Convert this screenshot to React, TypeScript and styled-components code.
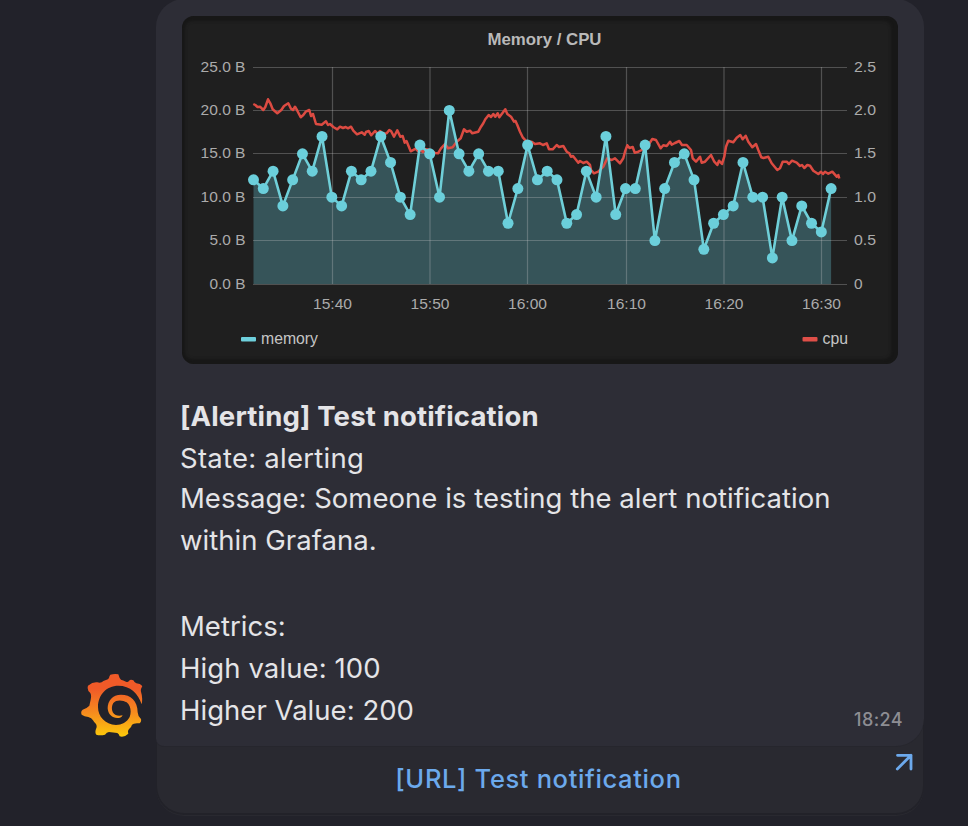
import React from "react";
import styled, { createGlobalStyle } from "styled-components";

const GlobalStyle = createGlobalStyle`
  *, *::before, *::after { box-sizing: border-box; }
  body { margin: 0; background: #22222a; }
`;

const Chat = styled.main`
  display: flex;
  align-items: flex-end;
  width: 968px;
  height: 826px;
  padding: 0 44px 12px 81px;
  overflow: hidden;
  background: #22222a;
  font-family: Inter, "Liberation Sans", sans-serif;
`;

const Avatar = styled.svg`
  flex: none;
  width: 62.4px;
  height: 63.4px;
  margin: 0 12.6px 77px 0;
`;

const Message = styled.article`
  flex: none;
  width: 768px;
`;

const Bubble = styled.section`
  position: relative;
  height: 748px;
  padding: 17px 26px 0 25px;
  background: #2d2d36;
  border-radius: 28px 28px 28px 8px;
  border-bottom: 1px solid #26262d;
`;

const Preview = styled.figure`
  width: 716px;
  height: 348px;
  margin: 0 0 0 1px;
  border-radius: 12px;
  overflow: hidden;
  background: #1f1f1f;
  box-shadow: inset -2px 0 3px 5px #171717;
`;

const ChartSvg = styled.svg`
  display: block;
  font-family: "Liberation Sans", Arial, sans-serif;
`;

const Lines = styled.div`
  padding-top: 31px;
  margin-left: -1px;
  color: #e4e4e7;
`;

const Line = styled.p<{ $bold?: boolean; $height?: number; $spacing?: number }>`
  margin: 0;
  height: ${(p) => p.$height ?? 42}px;
  line-height: 42px;
  font-size: 27.5px;
  white-space: nowrap;
  font-weight: ${(p) => (p.$bold ? 700 : 400)};
  letter-spacing: ${(p) => p.$spacing ?? 0.03}px;
`;

const Time = styled.time`
  position: absolute;
  right: 21px;
  bottom: 14px;
  color: #8d8d93;
  font-size: 18px;
  font-weight: 500;
  line-height: 24px;
  letter-spacing: 0.4px;
`;

const LinkButton = styled.a`
  display: flex;
  position: relative;
  z-index: -1;
  align-items: center;
  justify-content: center;
  height: 95px;
  margin-top: -28px;
  padding: 23px 3px 0 0;
  border: 1px solid #222229;
  border-radius: 0 0 28px 28px;
  background: #292930;
  box-shadow: 0 1px 0 #222229, 0 2px 0 #292930;
  color: #6ca9ec;
  font-size: 25.5px;
  font-weight: 500;
  letter-spacing: 0.64px;
`;

const Stack = styled.div`
  position: relative;
  z-index: 0;
`;

const Arrow = styled.svg`
  position: absolute;
  top: 32px;
  right: 9px;
`;

const memory = [
  12, 11, 13, 9, 12, 15, 13, 17, 10, 9, 13, 12, 13, 17, 14, 10, 8, 16, 15, 10,
  20, 15, 13, 15, 13, 13, 7, 11, 16, 12, 13, 12, 7, 8, 13, 10, 17, 8, 11, 11,
  16, 5, 11, 14, 15, 12, 4, 7, 8, 9, 14, 10, 10, 3, 10, 5, 9, 7, 6, 11,
];
const baseY = 284;
const memX = (i: number) => 253.5 + i * 9.79;
const memY = (v: number) => baseY - v * 8.68;
const memLine = memory.map((v, i) => `${memX(i).toFixed(2)},${memY(v).toFixed(2)}`).join(" ");

const cpu = `253.3,104 255.3,105 257.5,107 260,106.7 263.3,110 265.3,107 268,99.3 270.3,103.3 272.7,109.3 277.3,113.3
281.3,110 284,106 288.3,103.3 291,108.7 293,110 295,106.7 297.3,110.7 300.7,117.3 303.3,115 305.7,111.7 309.3,110 311,116
313,114 316,124 321.7,124.7 326,121.3 328,125 330,124 333.3,127 337.3,129.3 340,126.7 343,128 345.7,127 348,128.3 351,126.7
353.3,130.7 357,134.3 361.7,132.3 364.7,134.7 366,132 368.7,131 371.3,135.3 375,131 378,134 380,131 383,134 386.7,133.3
389.3,130 391,131 394,136.7 397.3,130.3 400.3,136.7 402.7,136 404.7,142.7 406.5,141 410.7,151.3 415.7,148.7 418,151 420,150
423,152 425,149 430,150 435,153 438,153.3 441,148.3 445,144 448,148.3 452.7,147.3 456.7,141.7 460.7,138.3 464,129.3
466.7,131.7 470,130.7 472.3,133.3 478.3,131.7 481,126.7 483.3,123.3 485.3,119.3 488.7,115 491,117 493.3,114 495.3,116.7
497.7,113.3 499.3,117.3 502.7,112.7 505.3,109.3 507.3,114 511,116.7 514,121.7 515.5,121 517.3,125 520,131.7 522.7,137.3
526.7,141.7 531.7,141.7 535,144 540,143.3 543,145 546.7,143.3 549,149.3 552.7,149.3 556.7,145 559,147 563.3,146
566.7,151.7 569.3,153.3 571,156.7 573,156 578.3,162.7 580,161 583.3,163 586.7,161.7 590,165 591,170 594,173.3 598.3,171.7
603.3,166.7 607.3,158.3 611.7,160 615,158.3 620,163.3 623.3,158.3 625,151.7 627.3,145.3 629.5,148 632.7,147 634.7,152.7
638.3,151.7 641.7,150 645,145 649,144 652.3,139 656,140 660.7,148.3 663.3,145.3 666.7,146 670,141.7 671.7,144.7 675,143
679.3,141 682,145 686.7,145 691,150 692.7,158.3 696,161.7 700,156.7 701.7,162.7 705,161.7 711,155 714.3,161.7 717.3,165
719,160.7 722,164 724.3,156.7 726,146.7 728.3,140.7 733.3,142.3 736.7,137.7 740.3,135 742.7,139.3 745.7,135.7 748.3,141.7
752.3,147.3 756,144 758.3,150 761.3,157.3 763.5,158 768.3,156.7 771.7,163.3 777.3,170 780,168.3 782.7,161.7 786.7,161.7
789,164 792,160.7 796.7,162.7 800,166 802,165 804.3,168 807.3,165 810,165.7 813.3,170.7 818.3,174 821,171.7 823,174
825,171.7 828.3,173.7 832.3,171.7 836.7,176.7 838.3,175 839.3,178.5`;

const xTicks: [number, string][] = [
  [332.5, "15:40"], [430, "15:50"], [527.5, "16:00"], [626.5, "16:10"], [724, "16:20"], [821.5, "16:30"],
];
const yTicks: [number, string, string][] = [
  [67.5, "25.0 B", "2.5"], [110.5, "20.0 B", "2.0"], [153.5, "15.0 B", "1.5"],
  [197.5, "10.0 B", "1.0"], [240.5, "5.0 B", "0.5"], [284.5, "0.0 B", "0"],
];

function Chart() {
  return (
    <ChartSvg width="716" height="348" viewBox="182 16 716 348" role="img" aria-label="Memory / CPU">
      <text x="544.5" y="45" textAnchor="middle" fontSize="16.5" fontWeight="700" fill="#b9b9b9" textLength="114" lengthAdjust="spacingAndGlyphs">Memory / CPU</text>
      <polygon points={`253.5,${baseY} ${memLine} ${memX(59)},${baseY}`} fill="#6ed0e0" fillOpacity="0.3" />
      <g stroke="#c8c8c8" strokeOpacity="0.3" strokeWidth="1.2">
        {yTicks.map(([y]) => <line key={y} x1="253" x2="847" y1={y} y2={y} />)}
        {xTicks.map(([x]) => <line key={x} x1={x} x2={x} y1="67" y2="284" />)}
      </g>
      <polyline points={cpu} fill="none" stroke="#dc4b42" strokeWidth="2.5" strokeLinejoin="round" />
      <polyline points={memLine} fill="none" stroke="#6fcfd8" strokeWidth="2.6" strokeLinejoin="round" />
      {memory.map((v, i) => <circle key={i} cx={memX(i)} cy={memY(v)} r="5.5" fill="#6bcfdb" />)}
      <g fontSize="15.5" fill="#ababab">
        {yTicks.map(([y, l, r]) => (
          <React.Fragment key={y}>
            <text x="245.5" y={y + 4.9} textAnchor="end" textLength={l.length > 5 ? 45 : 36} lengthAdjust="spacingAndGlyphs">{l}</text>
            <text x="854" y={y + 4.9} textLength={r.length > 1 ? 22 : 8.6} lengthAdjust="spacingAndGlyphs">{r}</text>
          </React.Fragment>
        ))}
        {xTicks.map(([x, l]) => <text key={l} x={x} y="309" textAnchor="middle" textLength="39" lengthAdjust="spacingAndGlyphs">{l}</text>)}
      </g>
      <rect x="241" y="337" width="15" height="4.5" rx="1" fill="#6ed0dc" />
      <rect x="802.5" y="337" width="15" height="4.5" rx="1" fill="#df4f48" />
      <g fontSize="16.5" fill="#c5c5c5">
        <text x="261" y="344" textLength="57" lengthAdjust="spacingAndGlyphs">memory</text>
        <text x="822.5" y="344" textLength="25.5" lengthAdjust="spacingAndGlyphs">cpu</text>
      </g>
    </ChartSvg>
  );
}

function GrafanaLogo() {
  return (
    <Avatar viewBox="62 41 187.2 190.2" aria-label="Grafana">
      <defs>
        <linearGradient id="flame" gradientUnits="userSpaceOnUse" x1="150" x2="150" y1="230" y2="85">
          <stop offset="0" stopColor="#fcca0a" />
          <stop offset="0.5" stopColor="#f68c1e" />
          <stop offset="1" stopColor="#f05a28" />
        </linearGradient>
      </defs>
      <path
        fill="url(#flame)"
        d="M244 132Q248 112 242 94Q240 88 246 77Q240 69 228 69Q223 68 219 60Q210 56 206 62Q202 67 197 64Q188 59 182 58Q177 54 174 42Q162 40 150 43Q147 47 146 53Q144 57 137 59Q128 61 124 66Q118 68 111 66Q98 64 83 76Q79 90 90 98Q94 105 91 118Q89 127 87 136Q82 142 67 148Q60 154 64 163Q72 169 84 170Q94 173 98 180Q102 187 107 191Q111 198 107 206Q103 217 108 223Q119 227 134 223Q139 215 146 215Q159 217 171 218Q176 220 178 228Q190 233 204 220Q201 210 207 205Q213 201 215 193Q220 187 238 189Q244 184 242 176Q232 166 232 156C232 121 211 103 182 103C157 103 142 121 142 144C143 165 161 177 179 172Q185 170 187 165Q175 168 166 164C153 158 152 140 159 128C167 117 189 119 199 126C211 135 214 154 208 170C200 186 184 194 167 194C134 193 113 168 113 140C113 104 138 76 174 76C210 76 234 100 244 132Z"
      />
    </Avatar>
  );
}

export default function App() {
  return (
    <>
      <GlobalStyle />
      <Chat>
        <GrafanaLogo />
        <Message>
          <Stack>
            <Bubble>
              <Preview><Chart /></Preview>
              <Lines>
                <Line $bold $spacing={0.17}>[Alerting] Test notification</Line>
                <Line $height={40} $spacing={0.25}>State: alerting</Line>
                <Line>Message: Someone is testing the alert notification</Line>
                <Line $height={86}>within Grafana.</Line>
                <Line>Metrics:</Line>
                <Line $spacing={0.1}>High value: 100</Line>
                <Line>Higher Value: 200</Line>
              </Lines>
              <Time>18:24</Time>
            </Bubble>
            <LinkButton>
              [URL] Test notification
              <Arrow width="20" height="20" viewBox="0 0 20 20" fill="none" stroke="#6ca9ec" strokeWidth="2.8" strokeLinecap="round" strokeLinejoin="round">
                <path d="M3.5 3.3H17V17M17 3.3L3.3 17" />
              </Arrow>
            </LinkButton>
          </Stack>
        </Message>
      </Chat>
    </>
  );
}
